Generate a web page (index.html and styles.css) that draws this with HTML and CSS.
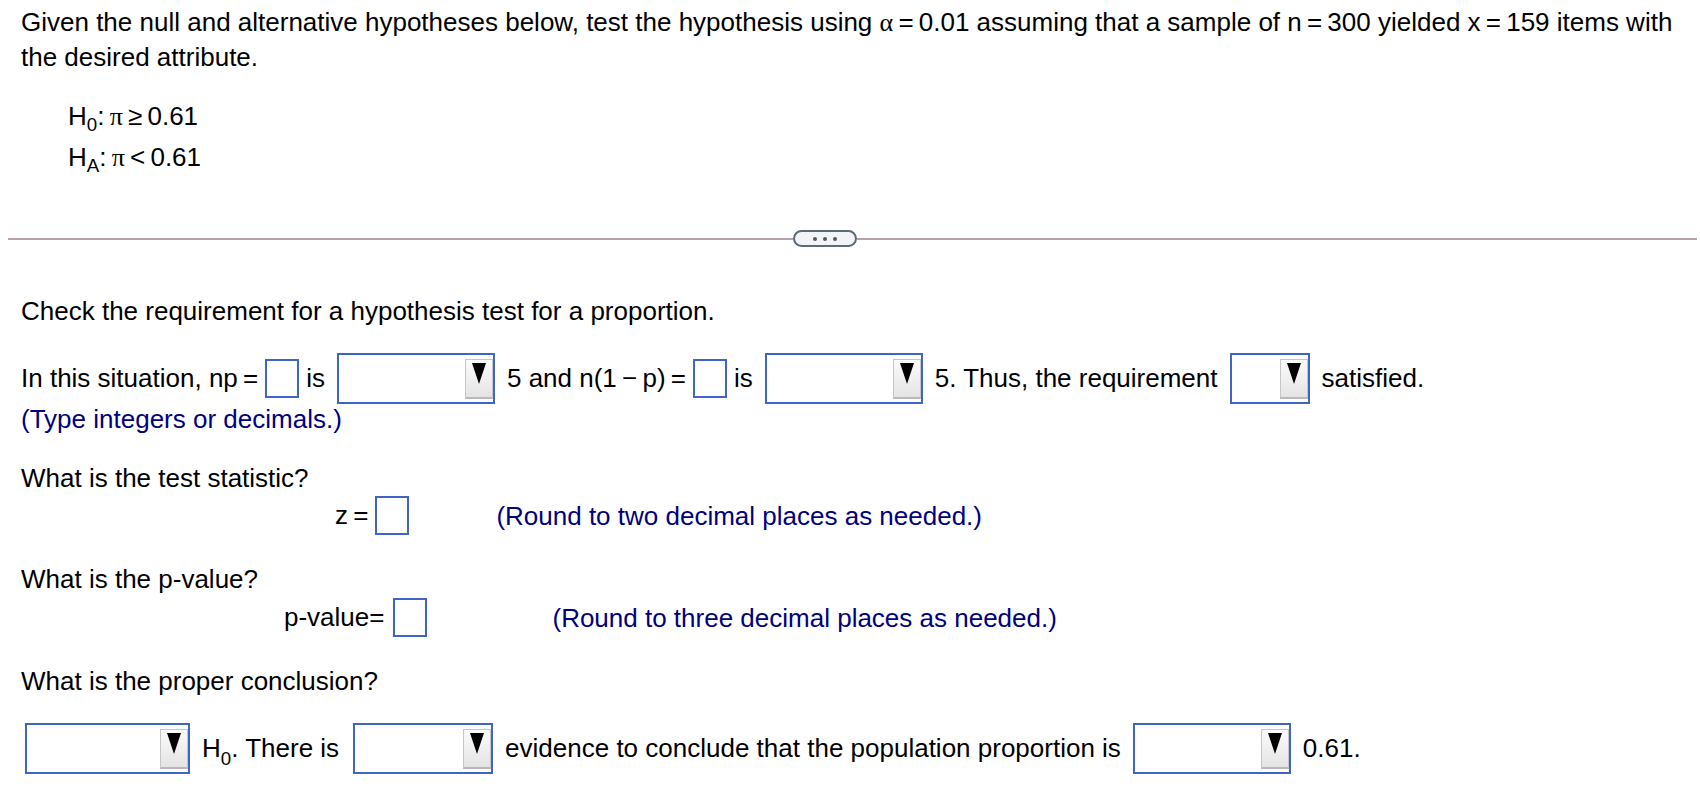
FILE: index.html
```html
<!DOCTYPE html>
<html>
<head>
<meta charset="utf-8">
<link rel="stylesheet" href="styles.css">
</head>
<body>
<div class="page">
  <div class="stem">
    <p class="stem-line">Given the null and alternative hypotheses below, test the hypothesis using <span class="gr">α</span>&thinsp;=&thinsp;0.01 assuming that a sample of n&thinsp;=&thinsp;300 yielded x&thinsp;=&thinsp;159 items with</p>
    <p class="stem-line">the desired attribute.</p>
  </div>
  <div class="hyp">
    <p class="hyp-line">H<sub class="sb">0</sub>:&thinsp;<span class="gr">π</span>&thinsp;≥&thinsp;0.61</p>
    <p class="hyp-line">H<sub class="sb">A</sub>:&thinsp;<span class="gr">π</span>&thinsp;&lt;&thinsp;0.61</p>
  </div>

  <div class="divider">
    <span class="rule rule-left"></span>
    <span class="more"><i class="dot"></i><i class="dot"></i><i class="dot"></i></span>
    <span class="rule rule-right"></span>
  </div>

  <div class="answer">
    <p class="q q-first">Check the requirement for a hypothesis test for a proportion.</p>

    <div class="row row-req">
      <span>In this situation, np&thinsp;=</span>
      <span class="tb"></span>
      <span>is</span>
      <span class="dd dd-157"><span class="dd-btn"><span class="tri"></span></span></span>
      <span>5 and n(1&thinsp;−&thinsp;p)&thinsp;=</span>
      <span class="tb"></span>
      <span>is</span>
      <span class="dd dd-157"><span class="dd-btn"><span class="tri"></span></span></span>
      <span>5. Thus, the requirement</span>
      <span class="dd dd-80"><span class="dd-btn"><span class="tri"></span></span></span>
      <span>satisfied.</span>
    </div>
    <p class="note">(Type integers or decimals.)</p>

    <p class="q">What is the test statistic?</p>
    <div class="row row-z">
      <span>z&thinsp;=</span>
      <span class="tb"></span>
      <span class="note note-z">(Round to two decimal places as needed.)</span>
    </div>

    <p class="q">What is the p-value?</p>
    <div class="row row-p">
      <span>p-value=</span>
      <span class="tb tb-p"></span>
      <span class="note note-p">(Round to three decimal places as needed.)</span>
    </div>

    <p class="q">What is the proper conclusion?</p>
    <div class="row row-concl">
      <span class="dd dd-165 dd-first"><span class="dd-btn"><span class="tri"></span></span></span>
      <span>H<sub class="sb sb-low">0</sub>. There is</span>
      <span class="dd dd-139"><span class="dd-btn"><span class="tri"></span></span></span>
      <span>evidence to conclude that the population proportion is</span>
      <span class="dd dd-157"><span class="dd-btn"><span class="tri"></span></span></span>
      <span>0.61.</span>
    </div>
  </div>
</div>
</body>
</html>
```

FILE: styles.css
```css
html, body {
  margin: 0;
  padding: 0;
  background: #ffffff;
}

body {
  font-family: "Liberation Sans", Arial, Helvetica, sans-serif;
  color: #000000;
  width: 1700px;
  height: 792px;
  overflow: hidden;
}

p {
  margin: 0;
}

.page {
  padding-top: 5px;
}

.stem {
  padding-left: 21px;
  font-size: 26px;
  line-height: 35px;
}

.gr {
  font-family: "Liberation Serif", "Times New Roman", serif;
}

.hyp {
  margin-top: 21px;
  padding-left: 68px;
  font-size: 26px;
  line-height: 40px;
}

.sb {
  font-size: 0.72em;
  vertical-align: -0.32em;
  line-height: 0;
}

.sb-low {
  vertical-align: -0.45em;
}

.divider {
  display: flex;
  align-items: center;
  height: 17px;
  margin: 52px 3px 0 8px;
}

.rule {
  height: 2px;
  background: #b7a0a8;
}

.rule-left {
  flex: 0 0 785px;
}

.rule-right {
  flex: 1 1 auto;
}

.more {
  box-sizing: border-box;
  flex: 0 0 64px;
  height: 17px;
  border: 2px solid #5e6a77;
  border-radius: 9px;
  background: #f2f4f6;
  display: flex;
  align-items: center;
  justify-content: center;
  gap: 6px;
}

.dot {
  width: 4px;
  height: 4px;
  border-radius: 50%;
  background: #4f5963;
}

.answer {
  padding-left: 21px;
  font-size: 26px;
}

.q {
  line-height: 30px;
  margin-top: 29px;
}

.q-first {
  margin-top: 49px;
}

.row {
  display: flex;
  align-items: center;
  white-space: nowrap;
}

.row-req {
  height: 51px;
  margin-top: 27px;
}

.note {
  color: #000080;
  line-height: 30px;
}

.row-z {
  height: 39px;
  margin-top: 3px;
  padding-left: 314px;
}

.row-p {
  height: 39px;
  margin-top: 4px;
  padding-left: 263px;
}

.note-z {
  margin-left: 80px;
}

.note-p {
  margin-left: 118px;
}

.row-concl {
  height: 51px;
  margin-top: 27px;
}

.tb {
  box-sizing: border-box;
  flex: none;
  width: 34px;
  height: 39px;
  border: 2px solid #3f66c6;
  background: #ffffff;
  margin: 0 7px 0 7px;
}

.tb-p {
  margin-left: 9px;
}

.dd {
  box-sizing: border-box;
  flex: none;
  height: 51px;
  border: 2px solid #3f66c6;
  background: #ffffff;
  display: flex;
  justify-content: flex-end;
  align-items: flex-start;
  padding-top: 4px;
  margin: 0 12px;
}

.dd-first {
  margin-left: 4px;
}

.dd-157 { width: 158px; }
.dd-80 { width: 80px; }
.dd-165 { width: 165px; }
.dd-139 { width: 140px; margin-left: 14px; }

.dd-btn {
  box-sizing: border-box;
  width: 28px;
  height: 40px;
  border: 1px solid #c6c6c6;
  border-bottom: 2px solid #b9b9b9;
  background: linear-gradient(#fbfbfb, #e4e4e4);
  display: flex;
  justify-content: center;
  padding-top: 3px;
}

.tri {
  width: 0;
  height: 0;
  border-left: 7px solid transparent;
  border-right: 7px solid transparent;
  border-top: 21px solid #000000;
}
```
